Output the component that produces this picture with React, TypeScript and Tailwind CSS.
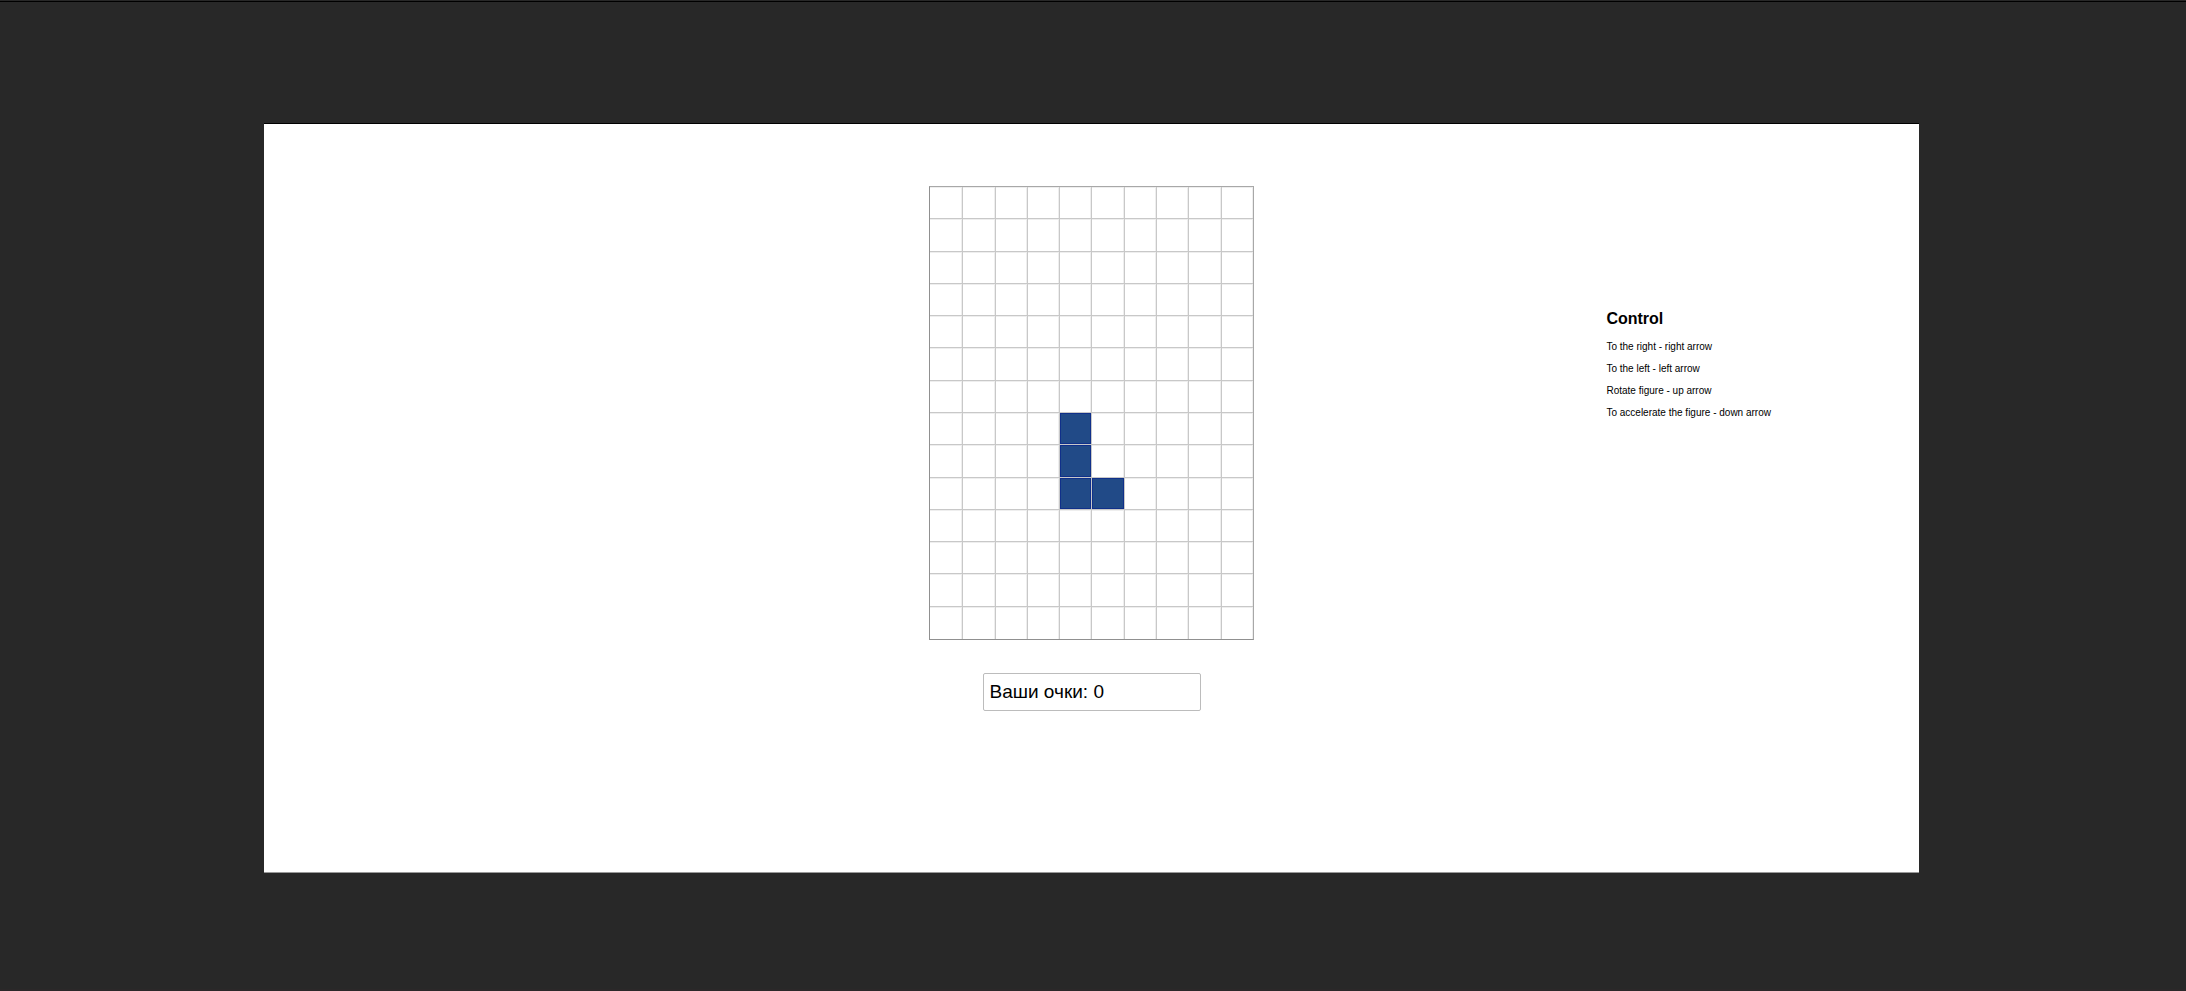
const ROWS = 14;
const COLUMNS = 10;
const FILLED = new Set(["7-4", "8-4", "9-4", "9-5"]);

const CONTROLS = [
  "To the right - right arrow",
  "To the left - left arrow",
  "Rotate figure - up arrow",
  "To accelerate the figure - down arrow",
];

function Board() {
  return (
    <div className="grid h-[454px] w-[325px] grid-cols-10 grid-rows-14 border border-t-[#a8a8a8] border-r-[#a8a8a8] border-b-[#909090] border-l-[#909090]">
      {Array.from({ length: ROWS * COLUMNS }, (_, i) => {
        const row = Math.floor(i / COLUMNS);
        const column = i % COLUMNS;
        const edges = `${row < ROWS - 1 ? "border-b" : ""} ${column > 0 ? "border-l" : ""}`;
        return (
          <div key={i} className={`border-[#c8c8c8] ${edges}`}>
            <div
              className={
                FILLED.has(`${row}-${column}`)
                  ? "h-full border border-[#10308a] bg-[#214a87]"
                  : "h-full border-t border-r border-[#eeeeee]"
              }
            />
          </div>
        );
      })}
    </div>
  );
}

export default function App() {
  return (
    <div className="flex min-h-screen flex-col border-b-2 border-[#2b2829] bg-[#282828] font-['Liberation_Sans',Arial,sans-serif] text-black">
      <div className="mt-px h-px bg-black" />
      <main className="mt-[121px] mr-[267px] mb-28 ml-[264px] grid min-h-[750px] grid-cols-[1fr_325px_1fr] border-t border-b border-t-black border-b-[#999999] bg-white">
        <section className="col-start-2 flex flex-col items-center pt-[62px]">
          <Board />
          <output className="mt-[33px] flex h-[38px] w-[218px] items-center rounded-xs border border-[#bcbcbc] px-1.5 text-[19px]">
            Ваши очки: 0
          </output>
        </section>
        <aside className="ml-[53%] pt-[185px]">
          <h1 className="text-base leading-5 font-bold">Control</h1>
          <div className="mt-[7px] text-[10px] leading-[22px]">
            {CONTROLS.map((line) => (
              <p key={line}>{line}</p>
            ))}
          </div>
        </aside>
      </main>
    </div>
  );
}
